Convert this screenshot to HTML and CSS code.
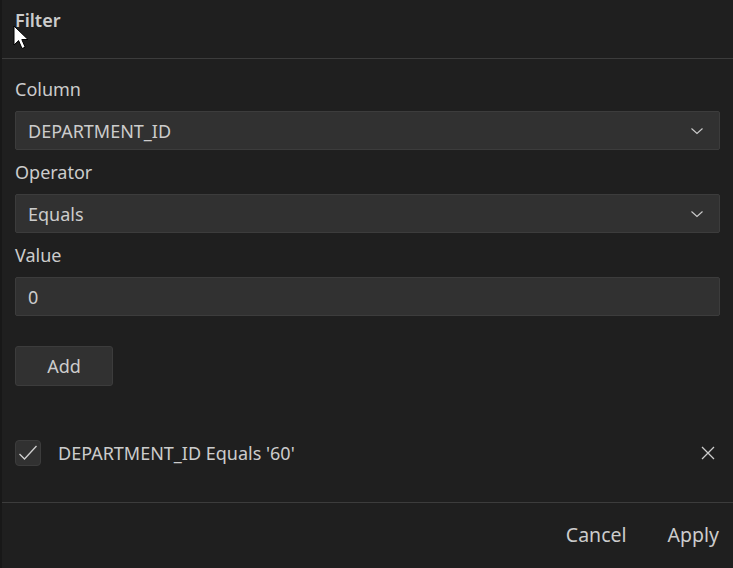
FILE: index.html
```html
<!DOCTYPE html>
<html>
<head>
<meta charset="utf-8">
<link rel="stylesheet" href="styles.css">
</head>
<body>
<div class="panel">
  <div class="header"><span class="title">Filter</span></div>
  <div class="content">
    <div class="label">Column</div>
    <div class="field select"><span>DEPARTMENT_ID</span>
      <svg class="chev" width="16" height="16" viewBox="0 0 16 16"><path d="M2.5 5.5 L8 10.5 L13.5 5.5" fill="none" stroke="#cccccc" stroke-width="1.1"/></svg>
    </div>
    <div class="label">Operator</div>
    <div class="field select"><span>Equals</span>
      <svg class="chev" width="16" height="16" viewBox="0 0 16 16"><path d="M2.5 5.5 L8 10.5 L13.5 5.5" fill="none" stroke="#cccccc" stroke-width="1.1"/></svg>
    </div>
    <div class="label">Value</div>
    <div class="field"><span>0</span></div>
    <div class="btn-row"><button class="add">Add</button></div>
    <div class="filter-row">
      <div class="check">
        <svg width="24" height="24" viewBox="0 0 24 24"><path d="M3.5 13 L8.5 18 L20.5 5" fill="none" stroke="#d0d0d0" stroke-width="1.3"/></svg>
      </div>
      <span class="filter-text">DEPARTMENT_ID Equals '60'</span>
      <svg class="close" width="16" height="16" viewBox="0 0 16 16"><path d="M2 2 L14 14 M14 2 L2 14" fill="none" stroke="#cccccc" stroke-width="1.3"/></svg>
    </div>
  </div>
  <div class="footer">
    <span class="fbtn">Cancel</span>
    <span class="fbtn">Apply</span>
  </div>
</div>
<svg class="cursor" width="20" height="28" viewBox="0 0 20 28"><path d="M1 1 L1 20 L5.6 15.6 L9 23.5 L12.2 22.2 L8.8 14.5 L15 14.5 Z" fill="#ffffff" stroke="#000000" stroke-width="1"/></svg>
</body>
</html>
```

FILE: styles.css
```css
html, body {
  margin: 0;
  padding: 0;
  background: #1f1f1f;
  width: 733px;
  height: 568px;
  overflow: hidden;
}
body {
  font-family: "Noto Sans", "Open Sans", sans-serif;
  color: #cccccc;
  position: relative;
}
.panel {
  box-sizing: border-box;
  width: 733px;
  height: 568px;
  border-left: 2px solid #181818;
  display: flex;
  flex-direction: column;
}
.header {
  height: 59px;
  flex-shrink: 0;
  border-bottom: 1px solid #3c3c3c;
  padding: 8px 0 0 13px;
  box-sizing: border-box;
}
.title {
  font-size: 18px;
  font-weight: 600;
  color: #cccccc;
}
.content {
  padding: 19px 13px 0 13px;
  display: flex;
  flex-direction: column;
  flex: 1;
}
.label {
  font-size: 18px;
  height: 22px;
  line-height: 22px;
  margin-bottom: 11px;
}
.field {
  box-sizing: border-box;
  height: 39px;
  background: #313131;
  border: 1px solid #3c3c3c;
  border-radius: 2px;
  display: flex;
  align-items: center;
  padding: 0 12px;
  font-size: 18px;
  margin-bottom: 11px;
}
.field span { flex: 1; }
.chev { margin-right: 2px; }
.btn-row { padding-top: 19px; }
.add {
  box-sizing: border-box;
  width: 98px;
  height: 40px;
  background: #313131;
  border: 1px solid #3c3c3c;
  border-radius: 3px;
  color: #cccccc;
  font-family: "Noto Sans", "Open Sans", sans-serif;
  font-size: 18px;
  padding: 0 0 1px 0;
}
.filter-row {
  margin-top: 54px;
  display: flex;
  align-items: center;
  height: 26px;
}
.check {
  box-sizing: border-box;
  width: 26px;
  height: 26px;
  background: #313131;
  border: 1px solid #3c3c3c;
  border-radius: 4px;
  display: flex;
  align-items: center;
  justify-content: center;
}
.check svg { display: block; }
.filter-text {
  font-size: 18px;
  margin-left: 17px;
  flex: 1;
}
.close { margin-right: 4px; }
.footer {
  height: 66px;
  flex-shrink: 0;
  border-top: 1px solid #3c3c3c;
  box-sizing: border-box;
  display: flex;
  justify-content: flex-end;
  align-items: center;
  gap: 41px;
  padding: 0 14px 2px 0;
  font-size: 19.5px;
}
.cursor {
  position: absolute;
  left: 13px;
  top: 25px;
}
```
